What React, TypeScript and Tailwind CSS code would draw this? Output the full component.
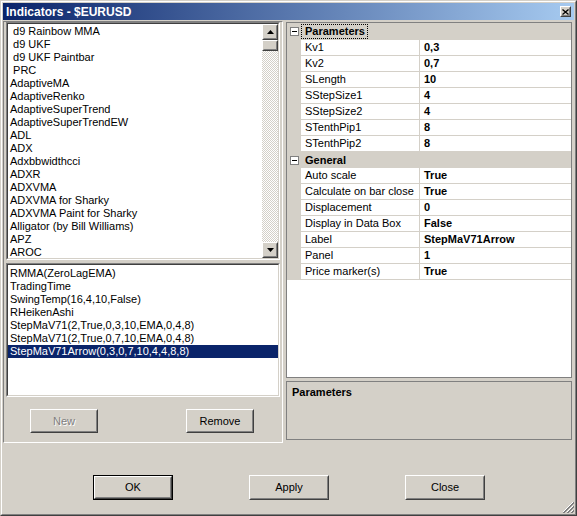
import React from 'react';

const topItems = [
  ' d9 Rainbow MMA',
  ' d9 UKF',
  ' d9 UKF Paintbar',
  ' PRC',
  'AdaptiveMA',
  'AdaptiveRenko',
  'AdaptiveSuperTrend',
  'AdaptiveSuperTrendEW',
  'ADL',
  'ADX',
  'Adxbbwidthcci',
  'ADXR',
  'ADXVMA',
  'ADXVMA for Sharky',
  'ADXVMA Paint for Sharky',
  'Alligator (by Bill Williams)',
  'APZ',
  'AROC',
];

const activeItems = [
  'RMMA(ZeroLagEMA)',
  'TradingTime',
  'SwingTemp(16,4,10,False)',
  'RHeikenAshi',
  'StepMaV71(2,True,0,3,10,EMA,0,4,8)',
  'StepMaV71(2,True,0,7,10,EMA,0,4,8)',
  'StepMaV71Arrow(0,3,0,7,10,4,4,8,8)',
];

const params = [
  ['Kv1', '0,3'],
  ['Kv2', '0,7'],
  ['SLength', '10'],
  ['SStepSize1', '4'],
  ['SStepSize2', '4'],
  ['STenthPip1', '8'],
  ['STenthPip2', '8'],
];

const general = [
  ['Auto scale', 'True'],
  ['Calculate on bar close', 'True'],
  ['Displacement', '0'],
  ['Display in Data Box', 'False'],
  ['Label', 'StepMaV71Arrow'],
  ['Panel', '1'],
  ['Price marker(s)', 'True'],
];

function Sunken({ className, children }: { className?: string; children: React.ReactNode }) {
  return (
    <div className={`border border-t-[#808080] border-l-[#808080] border-r-white border-b-white ${className ?? ''}`}>
      <div className="h-full border border-t-[#404040] border-l-[#404040] border-r-[#d4d0c8] border-b-[#d4d0c8] bg-white overflow-hidden">
        {children}
      </div>
    </div>
  );
}

// classic raised 3d button face
function Raised({ className, children }: { className?: string; children?: React.ReactNode }) {
  return (
    <div className={`border border-t-white border-l-white border-r-[#404040] border-b-[#404040] bg-[#d4d0c8] ${className ?? ''}`}>
      <div className="h-full border border-t-[#d4d0c8] border-l-[#d4d0c8] border-r-[#808080] border-b-[#808080] flex items-center justify-center">
        {children}
      </div>
    </div>
  );
}

function Arrow({ up }: { up?: boolean }) {
  return (
    <svg width="7" height="4" viewBox="0 0 7 4">
      {up ? <polygon points="3.5,0 7,4 0,4" fill="#000" /> : <polygon points="0,0 7,0 3.5,4" fill="#000" />}
    </svg>
  );
}

function MinusBox() {
  return (
    <div className="w-[9px] h-[9px] border border-[#808080] bg-white flex items-center justify-center">
      <div className="w-[5px] h-px bg-black" />
    </div>
  );
}

function PropRow({ name, value }: { name: string; value: string }) {
  return (
    <div className="flex h-[16px]">
      <div className="w-[14px] bg-[#d4d0c8]" />
      <div className="w-[119px] border-r border-b border-[#d4d0c8] pl-[4px] leading-[15px] whitespace-nowrap overflow-hidden">
        {name}
      </div>
      <div className="flex-1 border-b border-[#d4d0c8] pl-[4px] leading-[15px] font-bold whitespace-nowrap">{value}</div>
    </div>
  );
}

function Category({ label, focused, tall }: { label: string; focused?: boolean; tall?: boolean }) {
  return (
    <div className={`flex items-center bg-[#d4d0c8] ${tall ? 'h-[17px]' : 'h-[16px]'}`}>
      <div className="w-[14px] pl-[3px]">
        <MinusBox />
      </div>
      <span
        className={`font-bold leading-[13px] pl-[3px] pr-[2px] border ${focused ? 'border-dotted border-black' : 'border-transparent'}`}
      >
        {label}
      </span>
    </div>
  );
}

export default function App() {
  return (
    <div className="w-[577px] h-[516px] bg-[#d4d0c8] border border-t-[#d4d0c8] border-l-[#d4d0c8] border-r-[#404040] border-b-[#404040] font-['Liberation_Sans',Arial,sans-serif] text-[11px] text-black select-none">
      <div className="h-full border border-t-white border-l-white border-r-[#808080] border-b-[#808080] p-px flex flex-col">
        {/* Title bar */}
        <div className="h-[17px] flex items-center justify-between pl-[3px] pr-[3px] bg-[linear-gradient(to_right,#0a246a,#a6caf0)]">
          <span className="text-white font-bold text-[12px] leading-none">Indicators - $EURUSD</span>
          <Raised className="w-[11px] h-[11px]">
            <svg width="7" height="6" viewBox="0 0 7 6">
              <path d="M0.5 0.5 L6.5 5.5 M6.5 0.5 L0.5 5.5" stroke="#000" strokeWidth="1.3" />
            </svg>
          </Raised>
        </div>

        {/* Main area */}
        <div className="mt-px flex h-[422px]">
          {/* Left side */}
          <div className="w-[280px] border border-t-[#808080] border-l-[#808080] border-r-white border-b-white flex flex-col">
            <Sunken className="ml-[2px] w-[274px] h-[238px]">
              <div className="flex h-full">
                <div className="flex-1 pt-px pl-[2px]">
                  {topItems.map((t) => (
                    <div key={t} className="h-[13px] leading-[13px] whitespace-pre">
                      {t}
                    </div>
                  ))}
                </div>
                <div className="w-[16px] flex flex-col">
                  <Raised className="h-[16px]">
                    <Arrow up />
                  </Raised>
                  <Raised className="h-[11px]" />
                  <div className="flex-1 bg-[repeating-conic-gradient(#d4d0c8_0_25%,#ffffff_0_50%)] bg-[length:2px_2px]" />
                  <Raised className="h-[16px]">
                    <Arrow />
                  </Raised>
                </div>
              </div>
            </Sunken>

            <Sunken className="ml-[2px] mt-[3px] w-[274px] h-[134px]">
              <div className="pt-[2px]">
                {activeItems.map((t, i) => (
                  <div
                    key={t}
                    className={`h-[13px] leading-[13px] pl-[2px] whitespace-pre ${i === activeItems.length - 1 ? 'bg-[#0a246a] text-white' : ''}`}
                  >
                    {t}
                  </div>
                ))}
              </div>
            </Sunken>

            <div className="mt-[12px] flex pl-[26px] gap-[88px]">
              <Raised className="w-[68px] h-[24px]">
                <span className="text-[#808080] [text-shadow:1px_1px_0_#ffffff]">New</span>
              </Raised>
              <Raised className="w-[68px] h-[24px]">
                <span>Remove</span>
              </Raised>
            </div>
          </div>

          {/* Right side */}
          <div className="ml-[3px] flex-1 pr-[2px] mt-px flex flex-col">
            <div className="h-[356px] border border-[#808080] bg-white">
              <Category label="Parameters" focused tall />
              {params.map(([n, v]) => (
                <PropRow key={n} name={n} value={v} />
              ))}
              <Category label="General" />
              {general.map(([n, v]) => (
                <PropRow key={n} name={n} value={v} />
              ))}
            </div>
            <div className="mt-[3px] h-[59px] border border-[#808080] bg-[#d4d0c8] pl-[5px] pt-[2px]">
              <span className="font-bold">Parameters</span>
            </div>
          </div>
        </div>

        {/* Dialog buttons */}
        <div className="flex-1 flex items-start pt-[32px] pl-[90px] gap-[76px] relative">
          <div className="border border-black">
            <Raised className="w-[78px] h-[23px]">
              <span>OK</span>
            </Raised>
          </div>
          <Raised className="w-[80px] h-[25px]">
            <span>Apply</span>
          </Raised>
          <Raised className="w-[80px] h-[25px]">
            <span>Close</span>
          </Raised>
          <svg className="absolute right-0 bottom-0" width="12" height="12" viewBox="0 0 12 12">
            <path d="M11 1 L1 11 M11 5 L5 11 M11 9 L9 11" stroke="#ffffff" strokeWidth="1" />
            <path d="M12 1 L1 12 M12 2 L2 12 M12 5 L5 12 M12 6 L6 12 M12 9 L9 12 M12 10 L10 12" stroke="#808080" strokeWidth="1" />
          </svg>
        </div>
      </div>
    </div>
  );
}
